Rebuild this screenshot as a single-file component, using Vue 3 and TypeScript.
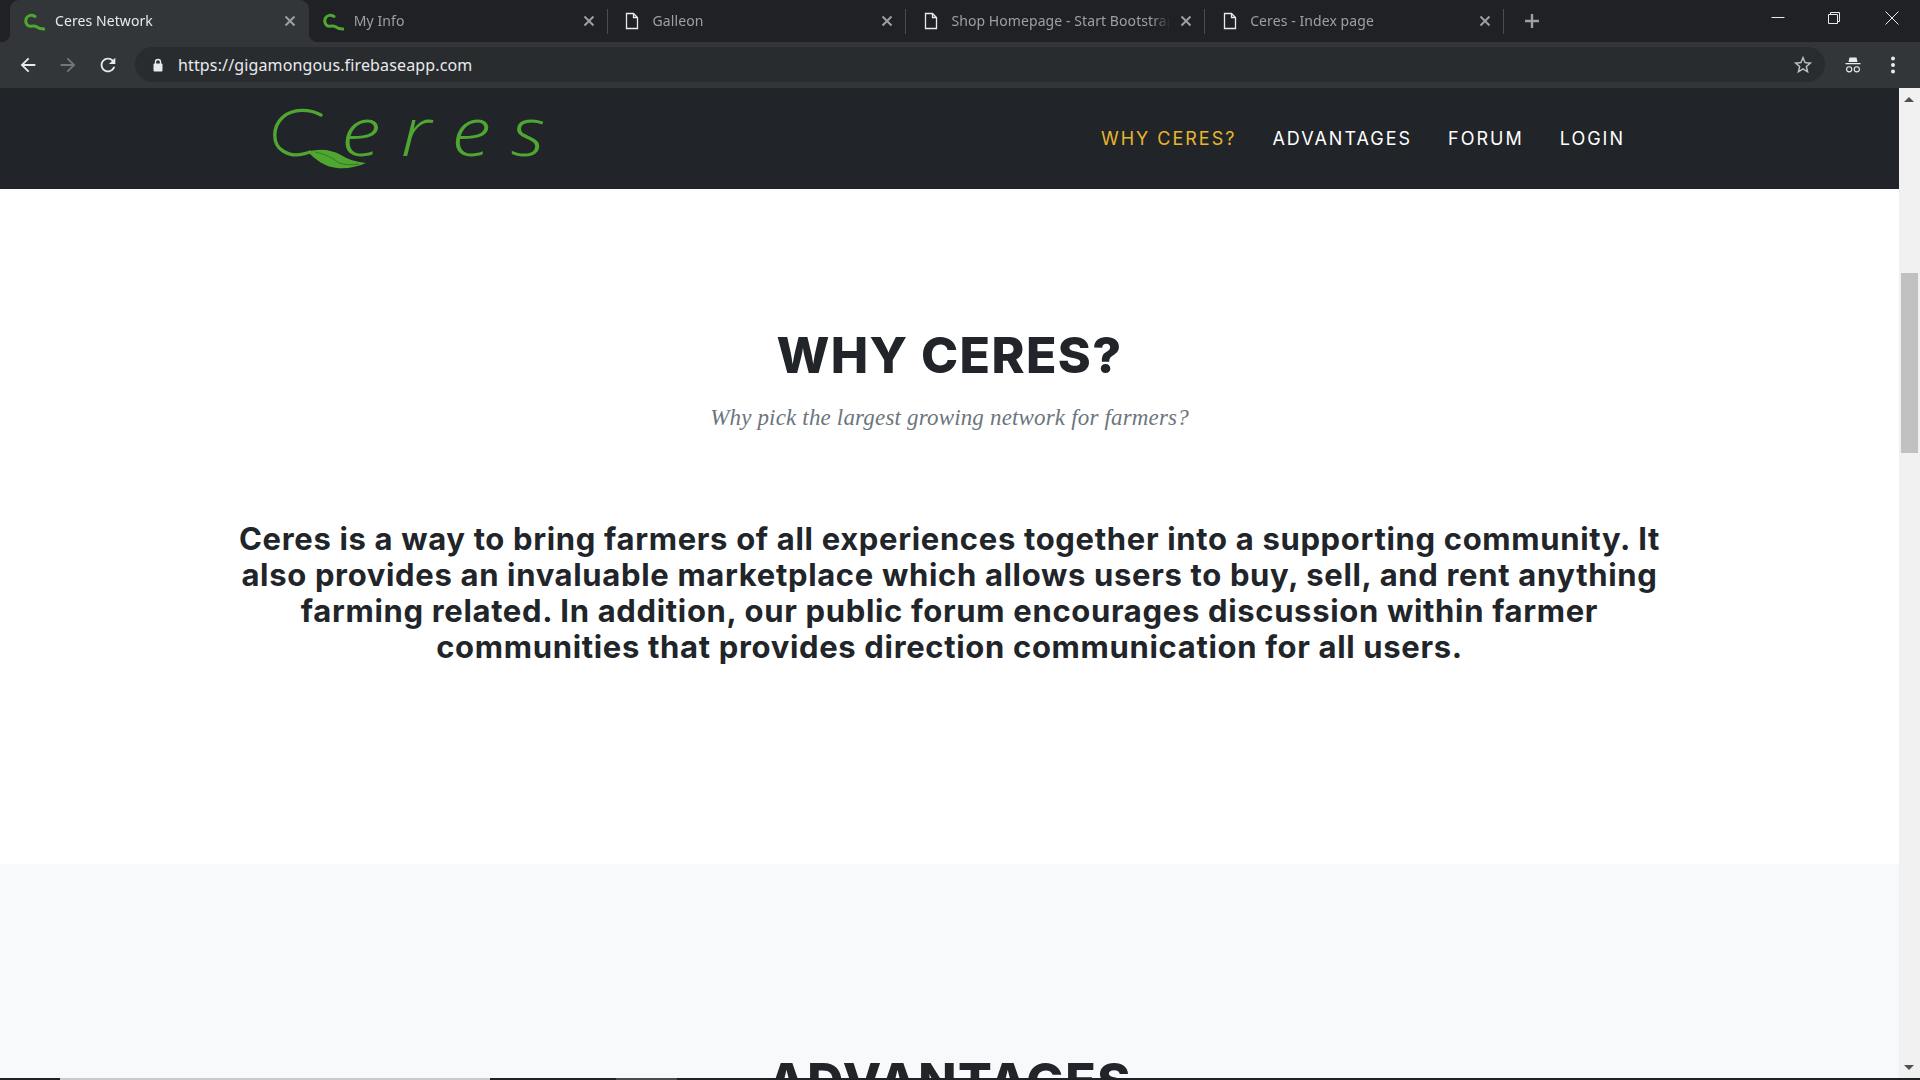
<template>
  <div class="screen">
    <header class="tabstrip">
      <div
        v-for="tab in tabs"
        :key="tab.title"
        class="tab"
        :class="{ 'tab--active': tab.active }"
      >
        <span class="tab__icon">
          <svg v-if="tab.leaf" width="21" height="21" viewBox="0 0 21 21">
            <path d="M11 5.500C8 3.500 4 4 2.500 7 1 10 2 14 5 15 8 15.500 10.500 14.500 12 15.500 14 17 17 18 20 18" fill="none" stroke="#4fa631" stroke-width="3" stroke-linecap="round" />
          </svg>
          <svg v-else width="16" height="18" viewBox="0 0 16 18">
            <path d="M2.500 1.500H9.500L13.500 5.500V16.500H2.500Z M9.500 1.500V5.500H13.500" fill="none" stroke="#e8eaed" stroke-width="1.300" />
          </svg>
        </span>
        <span class="tab__title">{{ tab.title }}</span>
        <svg class="tab__close" width="12" height="12" viewBox="0 0 12 12">
          <path d="M1.500 1.500L10.500 10.500M10.500 1.500L1.500 10.500" stroke="#9aa0a6" stroke-width="2" />
        </svg>
      </div>
      <svg class="new-tab" width="16" height="16" viewBox="0 0 16 16">
        <path d="M8 1V15M1 8H15" stroke="#9aa0a6" stroke-width="2.400" />
      </svg>
      <div class="window-controls">
        <span class="window-controls__btn">
          <svg width="14" height="14" viewBox="0 0 14 14"><path d="M0.500 6.500H13.500" stroke="#e8eaed" /></svg>
        </span>
        <span class="window-controls__btn">
          <svg width="14" height="14" viewBox="0 0 14 14"><path d="M0.500 3.500H9.500V12.500H0.500ZM2.500 3.500V1.500H11.500V10.500H9.500" fill="none" stroke="#e8eaed" /></svg>
        </span>
        <span class="window-controls__btn">
          <svg width="14" height="14" viewBox="0 0 14 14"><path d="M0.500 0.500L13.500 13.500M13.500 0.500L0.500 13.500" stroke="#e8eaed" /></svg>
        </span>
      </div>
    </header>

    <div class="toolbar">
      <span class="toolbar__btn">
        <svg width="22" height="22" viewBox="0 0 24 24"><path d="M20 11H7.830l5.590-5.590L12 4l-8 8 8 8 1.410-1.410L7.830 13H20v-2z" fill="#e8eaed" /></svg>
      </span>
      <span class="toolbar__btn">
        <svg width="22" height="22" viewBox="0 0 24 24"><path d="M4 11h12.170l-5.590-5.590L12 4l8 8-8 8-1.410-1.410L16.170 13H4v-2z" fill="#74777a" /></svg>
      </span>
      <span class="toolbar__btn">
        <svg width="22" height="22" viewBox="0 0 24 24"><path d="M17.650 6.350A7.958 7.958 0 0012 4c-4.420 0-7.990 3.580-7.990 8s3.570 8 7.990 8c3.730 0 6.840-2.550 7.730-6h-2.080A5.990 5.990 0 0112 18c-3.310 0-6-2.690-6-6s2.690-6 6-6c1.660 0 3.140.690 4.220 1.780L13 11h7V4l-2.350 2.350z" fill="#e8eaed" /></svg>
      </span>
      <div class="omnibox">
        <svg class="omnibox__lock" width="12" height="14" viewBox="0 0 12 14">
          <path d="M3.500 6V4a2.500 2.500 0 015 0v2" fill="none" stroke="#e8eaed" stroke-width="1.400" />
          <rect x="1.500" y="5.500" width="9" height="8" rx="1" fill="#e8eaed" />
        </svg>
        <span class="omnibox__url">https://gigamongous.firebaseapp.com</span>
        <svg class="omnibox__star" width="22" height="22" viewBox="0 0 24 24">
          <path d="M22 9.240l-7.190-.620L12 2 9.190 8.630 2 9.240l5.460 4.730L5.820 21 12 17.270 18.180 21l-1.630-7.030L22 9.240zM12 15.400l-3.760 2.270 1-4.280-3.320-2.880 4.380-.380L12 6.100l1.710 4.040 4.380.380-3.320 2.880 1 4.280L12 15.400z" fill="#bdc1c6" />
        </svg>
      </div>
      <span class="toolbar__btn toolbar__btn--first-right">
        <svg width="16" height="16" viewBox="0 0 16 16">
          <path d="M4.500 0.500H11.500L12.500 5H3.500Z M0.500 6H15.500V7.300H0.500Z" fill="#e8eaed" />
          <circle cx="4.200" cy="12.300" r="2.600" fill="none" stroke="#e8eaed" stroke-width="1.100" />
          <circle cx="11.800" cy="12.300" r="2.600" fill="none" stroke="#e8eaed" stroke-width="1.100" />
        </svg>
      </span>
      <span class="toolbar__btn">
        <svg width="6" height="18" viewBox="0 0 6 18">
          <circle cx="3" cy="2.500" r="2" fill="#e8eaed" />
          <circle cx="3" cy="9" r="2" fill="#e8eaed" />
          <circle cx="3" cy="15.500" r="2" fill="#e8eaed" />
        </svg>
      </span>
    </div>

    <div class="viewport">
      <div class="page">
        <nav class="navbar">
          <div class="logo">
            <svg class="logo__mark" width="72" height="70" viewBox="0 0 72 70">
              <path d="M52 10C41 4 24 3 14 12 3 22 3 39 14 46 23 52 32 50 41 47" fill="none" stroke="#4fa631" stroke-width="3.400" stroke-linecap="round" />
              <path d="M39 47C50 43 63 45 72 50 80 55 88 57 97 58 88 62 78 64 68 63 56 62 47 55 39 47Z" fill="#4fa631" />
              <path d="M46 47C56 49 64 53 70 58 76 60 82 60 90 59" fill="none" stroke="#2f6f1d" stroke-width="0.800" />
            </svg>
            <span class="logo__text">eres</span>
          </div>
          <ul class="navbar__links">
            <li
              v-for="link in links"
              :key="link.label"
              class="navbar__link"
              :class="{ 'navbar__link--active': link.active }"
            >
              {{ link.label }}
            </li>
          </ul>
        </nav>

        <section class="section section--why">
          <h2 class="section__heading">WHY CERES?</h2>
          <p class="section__subheading">Why pick the largest growing network for farmers?</p>
          <h4 class="section__lead">
            Ceres is a way to bring farmers of all experiences together into a supporting community. It<br />
            also provides an invaluable marketplace which allows users to buy, sell, and rent anything<br />
            farming related. In addition, our public forum encourages discussion within farmer<br />
            communities that provides direction communication for all users.
          </h4>
        </section>

        <section class="section section--advantages">
          <h2 class="section__heading">ADVANTAGES</h2>
        </section>
      </div>

      <div class="scrollbar">
        <span class="scrollbar__arrow scrollbar__arrow--up"></span>
        <span class="scrollbar__thumb"></span>
        <span class="scrollbar__arrow scrollbar__arrow--down"></span>
      </div>
    </div>

    <footer class="taskbar">
      <span class="taskbar__item taskbar__item--start"></span>
      <span class="taskbar__item taskbar__item--window"></span>
      <span class="taskbar__item taskbar__item--gap"></span>
      <span class="taskbar__item taskbar__item--app"></span>
    </footer>
  </div>
</template>

<script setup lang="ts">
interface BrowserTab {
  title: string
  leaf: boolean
  active?: boolean
}

interface NavLink {
  label: string
  active?: boolean
}

const tabs: BrowserTab[] = [
  { title: 'Ceres Network', leaf: true, active: true },
  { title: 'My Info', leaf: true },
  { title: 'Galleon', leaf: false },
  { title: 'Shop Homepage - Start Bootstrap', leaf: false },
  { title: 'Ceres - Index page', leaf: false },
]

const links: NavLink[] = [
  { label: 'WHY CERES?', active: true },
  { label: 'ADVANTAGES' },
  { label: 'FORUM' },
  { label: 'LOGIN' },
]
</script>

<style>
html,
body {
  margin: 0;
  overflow: hidden;
}
</style>

<style scoped>
.screen {
  width: 1920px;
  height: 1080px;
  display: flex;
  flex-direction: column;
  overflow: hidden;
  font-family: "Noto Sans", sans-serif;
}

.tabstrip {
  height: 42px;
  flex: none;
  display: flex;
  align-items: center;
  padding-left: 10px;
  background: #202124;
}

.tab {
  position: relative;
  width: 298.800px;
  height: 42px;
  flex: none;
  box-sizing: border-box;
  display: flex;
  align-items: center;
  padding: 0 13px 0 14px;
  color: #9aa0a6;
  font-size: 14px;
  letter-spacing: 0.08px;
}

.tab::after {
  content: "";
  position: absolute;
  right: 0;
  top: 9px;
  width: 1px;
  height: 25px;
  background: #4a4c50;
}

.tab--active {
  color: #e8eaed;
  background: #323639;
  border-radius: 9px 9px 0 0;
}

.tab--active::before {
  content: "";
  position: absolute;
  left: -9px;
  bottom: 0;
  width: 9px;
  height: 9px;
  background: radial-gradient(circle at 0 0, #202124 9px, #323639 9.5px);
}

.tab--active::after {
  right: -9px;
  top: auto;
  bottom: 0;
  width: 9px;
  height: 9px;
  background: radial-gradient(circle at 100% 0, #202124 9px, #323639 9.5px);
}

.tab__icon {
  width: 21px;
  height: 21px;
  flex: none;
  display: flex;
  align-items: center;
  justify-content: center;
  margin-right: 10px;
}

.tab__title {
  flex: 1;
  min-width: 0;
  margin-bottom: 1px;
  white-space: nowrap;
  overflow: hidden;
  -webkit-mask-image: linear-gradient(to left, transparent, #000 18px);
  mask-image: linear-gradient(to left, transparent, #000 18px);
}

.tab__close {
  flex: none;
  margin-left: 10px;
}

.new-tab {
  flex: none;
  margin-left: 20px;
}

.window-controls {
  margin-left: auto;
  display: flex;
  align-self: flex-start;
}

.window-controls__btn {
  width: 57px;
  height: 36px;
  display: flex;
  align-items: center;
  justify-content: center;
}

.toolbar {
  height: 46px;
  flex: none;
  box-sizing: border-box;
  display: flex;
  align-items: center;
  padding: 0 7px 1px 8px;
  background: #323639;
}

.toolbar__btn {
  width: 40px;
  height: 35px;
  flex: none;
  display: flex;
  align-items: center;
  justify-content: center;
}

.toolbar__btn--first-right {
  margin-left: 8px;
}

.omnibox {
  flex: 1;
  height: 35px;
  margin-left: 7px;
  display: flex;
  align-items: center;
  padding: 0 11px 0 17px;
  background: #292c2f;
  border-radius: 18px;
}

.omnibox__lock {
  flex: none;
  margin-right: 14px;
}

.omnibox__url {
  color: #e8eaed;
  font-size: 16px;
  letter-spacing: 0.14px;
  white-space: nowrap;
}

.omnibox__star {
  margin-left: auto;
}

.viewport {
  flex: 1;
  min-height: 0;
  display: flex;
}

.page {
  flex: 1;
  min-width: 0;
  overflow: hidden;
  background: #fff;
  color: #212529;
  font-family: Inter, sans-serif;
}

.navbar {
  height: 101px;
  box-sizing: border-box;
  display: flex;
  align-items: center;
  justify-content: space-between;
  padding: 0 274px 0 269px;
  background: #212529;
}

.logo {
  display: flex;
  height: 70px;
  margin-top: 3px;
}

.logo__mark {
  flex: none;
  overflow: visible;
}

.logo__text {
  margin-top: -10px;
  color: #4fa631;
  font-family: "Open Sans", sans-serif;
  font-size: 68px;
  font-style: italic;
  font-weight: 300;
  letter-spacing: 17px;
  line-height: 70px;
  transform: scaleX(1.18);
  transform-origin: left center;
}

.navbar__links {
  display: flex;
  gap: 36px;
  margin: 0;
  padding: 0;
  list-style: none;
}

.navbar__link {
  color: #fff;
  font-size: 18px;
  letter-spacing: 2px;
}

.navbar__link--active {
  color: #e9b52b;
}

.section {
  text-align: center;
}

.section--why {
  height: 675px;
  box-sizing: border-box;
  padding-top: 139px;
}

.section--advantages {
  padding-top: 190px;
  background: #f8f9fa;
  height: 400px;
}

.section__heading {
  margin: 0;
  font-size: 50px;
  font-weight: 800;
  letter-spacing: 1.400px;
  line-height: 55px;
}

.section__subheading {
  margin: 20px 0 0;
  color: #6c757d;
  font-family: "Liberation Serif", serif;
  font-size: 23px;
  font-style: italic;
  letter-spacing: 0.17px;
  line-height: 30px;
}

.section__lead {
  margin: 88px 0 0;
  font-size: 31px;
  font-weight: 700;
  letter-spacing: 0.670px;
  line-height: 36px;
}

.scrollbar {
  position: relative;
  width: 21px;
  flex: none;
  background: #f1f1f1;
}

.scrollbar__thumb {
  position: absolute;
  left: 2px;
  top: 185px;
  width: 17px;
  height: 180px;
  background: #c1c1c1;
}

.scrollbar__arrow {
  position: absolute;
  left: 5px;
  width: 0;
  height: 0;
  border-left: 5px solid transparent;
  border-right: 5px solid transparent;
}

.scrollbar__arrow--up {
  top: 9px;
  border-bottom: 5px solid #505050;
}

.scrollbar__arrow--down {
  bottom: 8px;
  border-top: 5px solid #505050;
}

.taskbar {
  height: 2px;
  flex: none;
  display: flex;
  background: #202124;
}

.taskbar__item--start {
  width: 60px;
}

.taskbar__item--window {
  width: 430px;
  background: #c9cacb;
}

.taskbar__item--gap {
  width: 126px;
}

.taskbar__item--app {
  width: 61px;
  background: #4a4b4d;
}
</style>
